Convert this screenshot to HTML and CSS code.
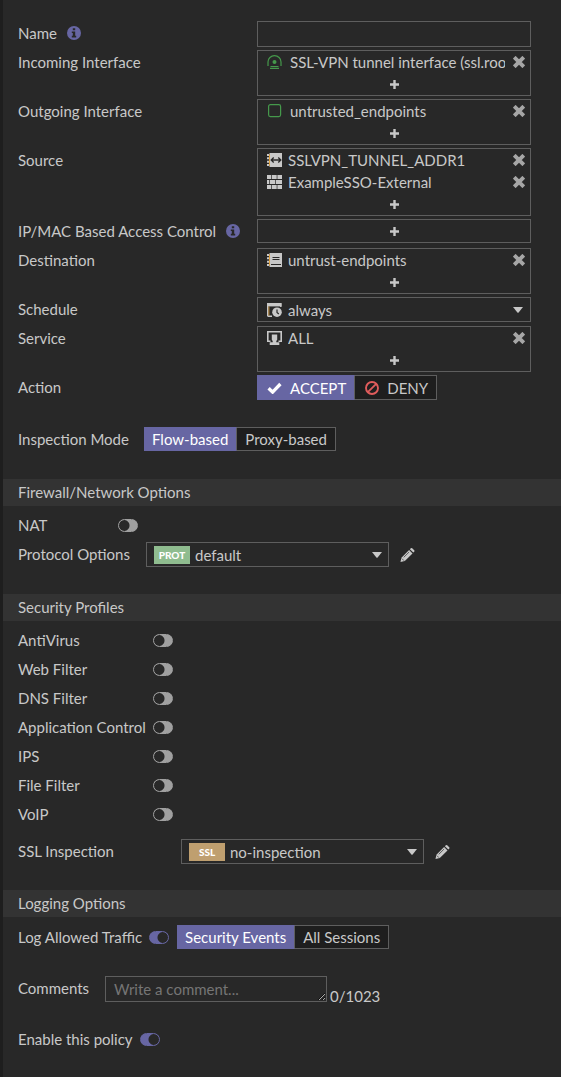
FILE: index.html
```html
<!DOCTYPE html>
<html lang="en">
<head>
<meta charset="utf-8">
<meta name="viewport" content="width=device-width, initial-scale=1">
<title>Edit Policy</title>
<link rel="stylesheet" href="styles.css">
</head>
<body>
<svg class="sprite" aria-hidden="true">
  <symbol id="i-info" viewBox="0 0 14 14"><circle cx="7" cy="7" r="7" fill="currentColor"/><path d="M5.8 2.2h2.4v2H5.8zM4.8 5.4h3.4v4.4h1v1.6H4.8V9.8h1V7h-1z" fill="#282828"/></symbol>
  <symbol id="i-plus" viewBox="0 0 9 9"><path d="M3.3 0h2.4v3.3H9v2.4H5.7V9H3.3V5.7H0V3.3h3.3z" fill="currentColor"/></symbol>
  <symbol id="i-times" viewBox="0 0 12 12"><path d="M2.6 2.6l6.8 6.8M9.4 2.6L2.6 9.4" stroke="currentColor" stroke-width="3.9" stroke-linecap="square"/></symbol>
  <symbol id="i-caret" viewBox="0 0 10 6"><path d="M0 0h10L5.6 5.5q-.6.6-1.2 0z" fill="currentColor"/></symbol>
  <symbol id="i-pencil" viewBox="0 0 14 14"><path d="M0 14l.9-4.3L8.6 2l3.4 3.4-7.7 7.7zM9.4 1.2l.9-.9q.7-.6 1.4 0l2 2q.6.7 0 1.4l-.9.9z" fill="currentColor"/><path d="M3.2 9.4L8.6 4M1.4 10.6l2 2" stroke="#282828" stroke-width=".7"/></symbol>
  <symbol id="i-tunnel" viewBox="0 0 15 14"><path d="M1 11V7a6.5 6.3 0 0 1 13 0v4M3.5 11.5h8M3 13.4h9" fill="none" stroke="currentColor" stroke-width="1.2"/><circle cx="7.5" cy="7" r="2" fill="currentColor"/></symbol>
  <symbol id="i-zone" viewBox="0 0 15 14"><rect x="1.6" y=".6" width="12" height="12" rx="1.8" fill="none" stroke="currentColor" stroke-width="1.2"/></symbol>
  <symbol id="i-range" viewBox="0 0 15 14"><path d="M2.5 0H15v14H2.5zM0 1h2v2H0zm0 3.3h2v2H0zm0 3.4h2v2H0zM0 11h2v2H0z" fill="currentColor"/><path d="M2.5 1.5v11" stroke="#e0a03c"/><path d="M4.5 7h9M6.7 4.5L4.2 7l2.5 2.5M11.3 4.5L13.8 7l-2.5 2.5" fill="none" stroke="#282828" stroke-width="1.3"/></symbol>
  <symbol id="i-wall" viewBox="0 0 15 14"><path d="M0 0h4.3v4H0zm5 0h4.7v4H5zm5.4 0H15v4h-4.6zM0 5h2.3v4H0zm3 0h5v4H3zm5.7 0H15v4H8.7zM0 10h4.3v4H0zm5 0h4.7v4H5zm5.4 0H15v4h-4.6z" fill="currentColor"/></symbol>
  <symbol id="i-book" viewBox="0 0 15 14"><path d="M2.5 0H15v14H2.5zM0 1h2v2H0zm0 3.3h2v2H0zm0 3.4h2v2H0zM0 11h2v2H0z" fill="currentColor"/><path d="M2.5 1.5v11" stroke="#e0a03c"/><path d="M5.5 4.5h7M5.5 6.5h7M4 11.5h10" stroke="#282828"/></symbol>
  <symbol id="i-schedule" viewBox="0 0 15 14"><path d="M.7 13.3V1h13.1v3M.7 13.3H5" fill="none" stroke="currentColor" stroke-width="1.4"/><path d="M0 0h14.5v3.4H0z" fill="currentColor"/><path d="M1.9 3.4v9.2" stroke="#e0a03c" stroke-width=".8"/><circle cx="10" cy="9.2" r="4.8" fill="currentColor"/><path d="M10 6.4v3l1.8 1.6" fill="none" stroke="#282828" stroke-width="1.2"/></symbol>
  <symbol id="i-service" viewBox="0 0 15 14"><path d="M3.5 10.2H.8V.8h13.4v9.4h-2.7" fill="none" stroke="currentColor" stroke-width="1.6"/><path d="M4.8 3.5h5.4v5.2L9.3 10v1.2h3V14H2.7v-2.8h3V10l-.9-1.3z" fill="currentColor"/></symbol>
  <symbol id="i-check" viewBox="0 0 15 12"><path d="M1.6 6.2l4 3.9L13.4 2" fill="none" stroke="currentColor" stroke-width="3.3"/></symbol>
  <symbol id="i-ban" viewBox="0 0 14 14"><circle cx="7" cy="7" r="6" fill="none" stroke="currentColor" stroke-width="1.9"/><path d="M2.8 11.2l8.4-8.4" stroke="currentColor" stroke-width="1.8"/></symbol>
</svg>
<form class="policy">
  <section class="group basics">
    <div class="row">
      <label class="name" for="name">Name <svg class="info"><use href="#i-info"/></svg></label>
      <input class="box text" id="name" type="text">
    </div>
    <div class="row">
      <span class="name">Incoming Interface</span>
      <div class="box picker">
        <div class="entry wide"><svg class="icon green"><use href="#i-tunnel"/></svg><span class="value">SSL-VPN tunnel interface (ssl.root)</span><button type="button" class="remove" aria-label="Remove"><svg><use href="#i-times"/></svg></button></div>
        <button type="button" class="add" aria-label="Add incoming interface"><svg><use href="#i-plus"/></svg></button>
      </div>
    </div>
    <div class="row">
      <span class="name">Outgoing Interface</span>
      <div class="box picker">
        <div class="entry wide"><svg class="icon green"><use href="#i-zone"/></svg><span class="value">untrusted_endpoints</span><button type="button" class="remove" aria-label="Remove"><svg><use href="#i-times"/></svg></button></div>
        <button type="button" class="add" aria-label="Add outgoing interface"><svg><use href="#i-plus"/></svg></button>
      </div>
    </div>
    <div class="row">
      <span class="name">Source</span>
      <div class="box picker">
        <div class="entry"><svg class="icon"><use href="#i-range"/></svg><span class="value">SSLVPN_TUNNEL_ADDR1</span><button type="button" class="remove" aria-label="Remove"><svg><use href="#i-times"/></svg></button></div>
        <div class="entry"><svg class="icon"><use href="#i-wall"/></svg><span class="value">ExampleSSO-External</span><button type="button" class="remove" aria-label="Remove"><svg><use href="#i-times"/></svg></button></div>
        <button type="button" class="add" aria-label="Add source"><svg><use href="#i-plus"/></svg></button>
      </div>
    </div>
    <div class="row">
      <span class="name">IP/MAC Based Access Control <svg class="info"><use href="#i-info"/></svg></span>
      <div class="box picker">
        <button type="button" class="add" aria-label="Add access control"><svg><use href="#i-plus"/></svg></button>
      </div>
    </div>
    <div class="row">
      <span class="name">Destination</span>
      <div class="box picker">
        <div class="entry"><svg class="icon"><use href="#i-book"/></svg><span class="value">untrust-endpoints</span><button type="button" class="remove" aria-label="Remove"><svg><use href="#i-times"/></svg></button></div>
        <button type="button" class="add" aria-label="Add destination"><svg><use href="#i-plus"/></svg></button>
      </div>
    </div>
    <div class="row">
      <label class="name" for="schedule">Schedule</label>
      <div class="box drop">
        <svg class="icon"><use href="#i-schedule"/></svg>
        <select id="schedule"><option>always</option></select>
        <svg class="caret"><use href="#i-caret"/></svg>
      </div>
    </div>
    <div class="row">
      <span class="name">Service</span>
      <div class="box picker">
        <div class="entry"><svg class="icon"><use href="#i-service"/></svg><span class="value">ALL</span><button type="button" class="remove" aria-label="Remove"><svg><use href="#i-times"/></svg></button></div>
        <button type="button" class="add" aria-label="Add service"><svg><use href="#i-plus"/></svg></button>
      </div>
    </div>
    <div class="row">
      <span class="name">Action</span>
      <div class="segments action">
        <button type="button" class="segment on" aria-pressed="true"><svg class="check"><use href="#i-check"/></svg>ACCEPT</button>
        <button type="button" class="segment" aria-pressed="false"><svg class="ban"><use href="#i-ban"/></svg>DENY</button>
      </div>
    </div>
  </section>

  <section class="group mode">
    <div class="row">
      <span class="name">Inspection Mode</span>
      <div class="segments">
        <button type="button" class="segment on" aria-pressed="true">Flow-based</button>
        <button type="button" class="segment" aria-pressed="false">Proxy-based</button>
      </div>
    </div>
  </section>

  <h2 class="heading">Firewall/Network Options</h2>
  <section class="group network">
    <div class="row">
      <label class="name short" for="nat">NAT</label>
      <input class="toggle" id="nat" type="checkbox">
    </div>
    <div class="row">
      <label class="name" for="protocol">Protocol Options</label>
      <div class="box drop profile">
        <span class="tag prot">PROT</span>
        <select id="protocol"><option>default</option></select>
        <svg class="caret"><use href="#i-caret"/></svg>
      </div>
      <button type="button" class="edit" aria-label="Edit protocol options"><svg><use href="#i-pencil"/></svg></button>
    </div>
  </section>

  <h2 class="heading">Security Profiles</h2>
  <section class="group security">
    <div class="row"><label class="name" for="av">AntiVirus</label><input class="toggle" id="av" type="checkbox"></div>
    <div class="row"><label class="name" for="web">Web Filter</label><input class="toggle" id="web" type="checkbox"></div>
    <div class="row"><label class="name" for="dns">DNS Filter</label><input class="toggle" id="dns" type="checkbox"></div>
    <div class="row"><label class="name" for="app">Application Control</label><input class="toggle" id="app" type="checkbox"></div>
    <div class="row"><label class="name" for="ips">IPS</label><input class="toggle" id="ips" type="checkbox"></div>
    <div class="row"><label class="name" for="file">File Filter</label><input class="toggle" id="file" type="checkbox"></div>
    <div class="row"><label class="name" for="voip">VoIP</label><input class="toggle" id="voip" type="checkbox"></div>
    <div class="row ssl">
      <label class="name" for="ssl">SSL Inspection</label>
      <div class="box drop profile">
        <span class="tag cert">SSL</span>
        <select id="ssl"><option>no-inspection</option></select>
        <svg class="caret"><use href="#i-caret"/></svg>
      </div>
      <button type="button" class="edit" aria-label="Edit SSL inspection"><svg><use href="#i-pencil"/></svg></button>
    </div>
  </section>

  <h2 class="heading">Logging Options</h2>
  <section class="group logging">
    <div class="row">
      <label class="name" for="log">Log Allowed Traffic</label>
      <input class="toggle" id="log" type="checkbox" checked>
      <div class="segments">
        <button type="button" class="segment on" aria-pressed="true">Security Events</button>
        <button type="button" class="segment" aria-pressed="false">All Sessions</button>
      </div>
    </div>
    <div class="row comments">
      <label class="name" for="comments">Comments</label>
      <textarea class="box text" id="comments" rows="1" placeholder="Write a comment..."></textarea>
      <span class="count">0/1023</span>
    </div>
    <div class="row">
      <label class="name" for="enable">Enable this policy</label>
      <input class="toggle" id="enable" type="checkbox" checked>
    </div>
  </section>
</form>
</body>
</html>
```
FILE: styles.css
```css
* {
  box-sizing: border-box;
}

body {
  margin: 0;
  min-height: 100vh;
  border-left: 3px solid #1e1e1e;
  background: #282828;
  color: #c8c8c8;
  color-scheme: dark;
  font: 15px/24px Lato, sans-serif;
}

.sprite {
  display: none;
}

button,
input,
select,
textarea {
  margin: 0;
  padding: 0;
  border: 0;
  border-radius: 0;
  background: none;
  color: inherit;
  font: inherit;
}

svg {
  display: block;
  flex: none;
}

.group {
  display: flex;
  flex-direction: column;
  gap: 3px;
  padding: 0 30px 0 15px;
}

.row {
  display: flex;
  align-items: flex-start;
  min-height: 26px;
}

.name {
  display: flex;
  flex: none;
  align-items: center;
  height: 24px;
  white-space: nowrap;
}

.info {
  width: 14px;
  height: 14px;
  margin-left: 10px;
  color: #6766a3;
}

.box {
  min-width: 0;
  border: 1px solid #5e5e5e;
}

.text {
  height: 26px;
  padding: 0 8px;
}

/* Fields holding a list of objects */
.picker {
  display: flex;
  flex-direction: column;
}

.entry {
  display: flex;
  align-items: center;
  height: 22px;
  padding: 0 5px 0 9px;
  gap: 6px;
}

.entry.wide {
  gap: 8px;
}

.entry .value {
  flex: 1;
  min-width: 0;
  overflow: hidden;
  white-space: nowrap;
}

.icon {
  width: 15px;
  height: 14px;
}

.green {
  color: #45994b;
}

.remove {
  color: #a6a6a6;
}

.remove svg {
  width: 12px;
  height: 12px;
}

.add {
  display: flex;
  align-items: center;
  justify-content: center;
  height: 22px;
}

.add svg {
  width: 9px;
  height: 9px;
}

/* Drop-downs */
.drop {
  display: flex;
  align-items: center;
  height: 25px;
  padding: 0 7px 0 9px;
  gap: 6px;
}

.drop select {
  flex: 1;
  min-width: 0;
  height: 23px;
  appearance: none;
}

.caret {
  width: 10px;
  height: 6px;
}

.profile {
  width: 243px;
  padding: 0 6px 0 7px;
  gap: 5px;
}

.tag {
  width: 36px;
  height: 18px;
  color: #fff;
  font-size: 10px;
  font-weight: 900;
  line-height: 18px;
  text-align: center;
}

.prot {
  background: #8fbc8f;
}

.cert {
  background: #bf9f6f;
}

.edit {
  align-self: center;
  margin-left: 11px;
}

.edit svg {
  width: 15px;
  height: 14px;
}

/* Segmented buttons */
.segments {
  display: flex;
  height: 24px;
}

.segment {
  display: flex;
  align-items: center;
  padding: 0 8px;
  border: 1px solid #5e5e5e;
  border-left: 0;
  background: #1e1e1e;
  white-space: nowrap;
}

.segment.on {
  border-color: #6766a3;
  border-right-color: #5e5e5e;
  background: #6766a3;
  color: #fff;
}

.action {
  height: 25px;
}

.action .segment {
  padding-left: 10px;
  gap: 8px;
}

.check {
  width: 15px;
  height: 12px;
}

.ban {
  width: 14px;
  height: 14px;
  color: #e05c5c;
}

/* Switches */
.toggle {
  flex: none;
  width: 20px;
  height: 13px;
  margin-top: 6px;
  border: 1px solid #a0a0a0;
  border-radius: 7px;
  appearance: none;
  background: radial-gradient(circle at 5px 50%, #282828 5px, #a0a0a0 6px);
}

.toggle:checked {
  border-color: #6766a3;
  background: radial-gradient(circle at 13px 50%, #282828 5px, #6766a3 6px);
}

.heading {
  height: 27px;
  margin: 0;
  padding: 0 15px;
  background: #333;
  font-size: 15px;
  font-weight: 400;
  line-height: 27px;
}

/* Section layouts */
.basics {
  padding-top: 21px;
}

.basics .name {
  width: 239px;
}

.basics .box {
  flex: 1;
}

.mode {
  padding-top: 26px;
  padding-bottom: 26px;
}

.mode .name {
  width: 126px;
}

.network {
  padding-top: 7px;
  padding-bottom: 26px;
}

.network .name {
  width: 128px;
}

.network .short {
  width: 100px;
}

.security {
  padding-top: 7px;
  padding-bottom: 25px;
}

.security .name {
  width: 135px;
}

.ssl {
  margin-top: 8px;
}

.security .ssl .name {
  width: 163px;
}

.logging {
  padding-top: 8px;
  padding-bottom: 24px;
  gap: 25px;
}

.logging .name {
  margin-right: 7px;
}

.logging .segments {
  margin-left: 8px;
}

.comments .name {
  width: 80px;
}

.comments .box {
  width: 222px;
}

.comments .text::placeholder {
  color: #757575;
}

.count {
  align-self: flex-end;
  margin: 0 0 -6px 3px;
}
```
